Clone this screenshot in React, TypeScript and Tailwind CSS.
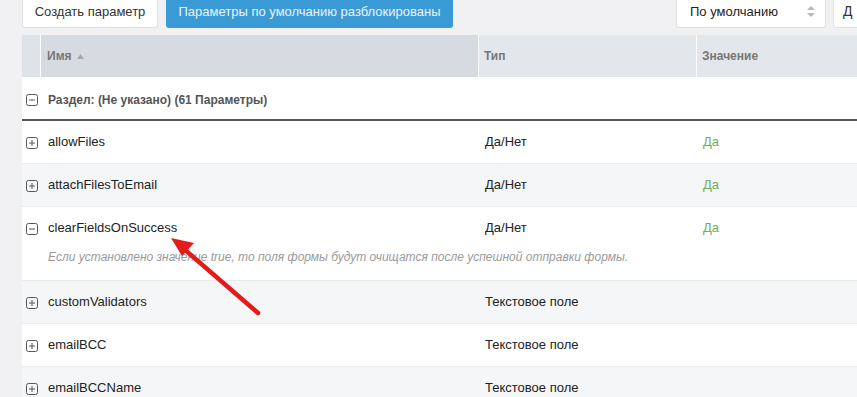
import React from 'react';

type Row = { name: string; type: string; value?: string; desc?: string; open?: boolean };

const rows: Row[] = [
  { name: 'allowFiles', type: 'Да/Нет', value: 'Да' },
  { name: 'attachFilesToEmail', type: 'Да/Нет', value: 'Да' },
  {
    name: 'clearFieldsOnSuccess',
    type: 'Да/Нет',
    value: 'Да',
    open: true,
    desc: 'Если установлено значение true, то поля формы будут очищатся после успешной отправки формы.',
  },
  { name: 'customValidators', type: 'Текстовое поле' },
  { name: 'emailBCC', type: 'Текстовое поле' },
  { name: 'emailBCCName', type: 'Текстовое поле' },
];

function Toggle({ open }: { open?: boolean }) {
  return (
    <svg width="12" height="12" viewBox="0 0 12 12" className="block">
      <rect x="0.5" y="0.5" width="11" height="11" rx="2" fill="none" stroke="#555" />
      <line x1="3" y1="6" x2="9" y2="6" stroke="#555" />
      {!open && <line x1="6" y1="3" x2="6" y2="9" stroke="#555" />}
    </svg>
  );
}

export default function App() {
  return (
    <div className="relative w-[857px] h-[397px] overflow-hidden bg-[#f1f1f3] font-['Liberation_Sans',Arial,sans-serif] text-[13px] text-[#222]">
      {/* toolbar */}
      <div className="flex h-[28px] pl-[22px]">
        <button className="shrink-0 h-[28px] w-[136px] pb-[4px] bg-white border border-t-0 border-[#e0e0e0] rounded-b-[3px] text-[13px] text-[#333] whitespace-nowrap">
          Создать параметр
        </button>
        <button className="shrink-0 ml-[8px] h-[28px] w-[287px] pb-[4px] bg-[#3a9ad6] rounded-b-[3px] text-[13px] text-[#eaf5fc] whitespace-nowrap">
          Параметры по умолчанию разблокированы
        </button>
        <div className="shrink-0 ml-[223px] h-[28px] w-[150px] pb-[4px] bg-white border border-t-0 border-[#e0e0e0] rounded-b-[3px] flex items-center pl-[13px] pr-[10px] text-[13px] text-[#222]">
          <span className="flex-1">По умолчанию</span>
          <svg width="8" height="11" viewBox="0 0 8 11">
            <path d="M4 0 L8 4 L0 4 Z" fill="#b8b8b8" />
            <path d="M4 11 L8 7 L0 7 Z" fill="#b8b8b8" />
          </svg>
        </div>
        <div className="shrink-0 ml-[7px] h-[28px] w-[40px] pb-[4px] bg-white border border-t-0 border-[#e0e0e0] rounded-b-[3px] flex items-center pl-[9px] text-[14px] text-[#333]">
          Д
        </div>
      </div>

      {/* table */}
      <div className="mt-[7px] ml-[22px] bg-white">
        <div className="grid grid-cols-[19px_438px_218px_1fr] h-[42px] text-[12px] font-bold text-[#777]">
          <div className="bg-[#dfe3e7] border-r border-white" />
          <div className="bg-[#d5dbe1] border-r border-white flex items-center pl-[6px] gap-[5px]">
            Имя
            <svg width="7" height="5" viewBox="0 0 7 5">
              <path d="M3.5 0 L7 5 L0 5 Z" fill="#a9a9a9" />
            </svg>
          </div>
          <div className="bg-[#e3e7eb] border-r border-white flex items-center pl-[5px]">Тип</div>
          <div className="bg-[#e3e7eb] flex items-center pl-[5px]">Значение</div>
        </div>

        <div className="flex items-center h-[44px] pt-[4px] border-b-[2px] border-[#555] pl-[4px] text-[12px] font-bold text-[#555]">
          <Toggle open />
          <span className="ml-[10px]">Раздел: (Не указано) (61 Параметры)</span>
        </div>

        {rows.map((r, i) => (
          <div
            key={r.name}
            className={`border-b border-[#e9ebee] ${i % 2 === 1 ? 'bg-[#f5f6f8]' : 'bg-white'}`}
          >
            <div className="grid grid-cols-[19px_438px_218px_1fr] h-[42px] items-center">
              <div className="pl-[4px] pt-[2px]">
                <Toggle open={r.open} />
              </div>
              <div className="pl-[7px]">{r.name}</div>
              <div className="pl-[6px]">{r.type}</div>
              <div className="pl-[6px] text-[#6cb05c]">{r.value}</div>
            </div>
            {r.desc && (
              <div className="-mt-[8px] h-[39px] pt-[9px] leading-[14px] pl-[26px] text-[12px] italic text-[#9a9a9a]">
                {r.desc}
              </div>
            )}
          </div>
        ))}
      </div>

      {/* annotation arrow */}
      <svg className="absolute left-0 top-0 pointer-events-none" width="857" height="397">
        <line x1="258" y1="313" x2="184" y2="249" stroke="#e41b1b" strokeWidth="4.5" strokeLinecap="round" />
        <path d="M171 238 L194 243 L182 256 Z" fill="#e41b1b" />
      </svg>
    </div>
  );
}
